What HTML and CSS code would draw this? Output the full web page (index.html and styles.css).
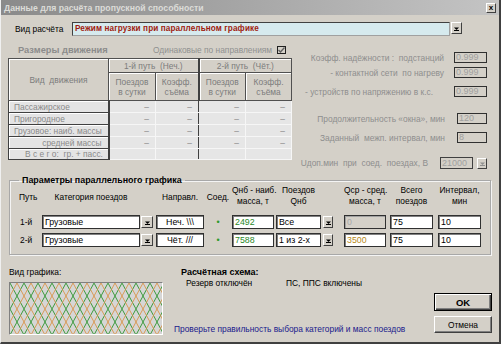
FILE: index.html
```html
<!DOCTYPE html>
<html>
<head>
<meta charset="utf-8">
<link rel="stylesheet" href="styles.css">
</head>
<body>
<div class="win">
  <div class="titlebar">
    <span class="title-text">Данные для расчёта пропускной способности</span>
    <span class="close">x</span>
  </div>
  <div class="calc-row">
    <span class="calc-label">Вид расчёта</span>
    <div class="combo">Режим нагрузки при параллельном графике</div>
    <span class="ddbtn combo-btn"><svg width="5" height="5" viewBox="0 0 5 5"><path d="M0 1.5h5L2.5 4z" fill="#000"/><path d="M0 4.5h5" stroke="#000" stroke-width="1"/></svg></span>
  </div>

  <div class="top">
    <div class="left">
      <div class="sizes-head">
        <span class="sizes-title">Размеры движения</span>
        <span class="same">Одинаковые по направлениям</span>
        <span class="check"><svg width="7" height="6" viewBox="0 0 7 6"><path d="M0.5 3l2 2 4-4.5" fill="none" stroke="#606060" stroke-width="1.4"/></svg></span>
      </div>
      <table class="grid">
        <colgroup><col class="c0"><col class="c1"><col class="c2"><col class="c3"><col class="c4"></colgroup>
        <tr class="h1">
          <th rowspan="2">Вид &nbsp;движения</th>
          <th colspan="2" class="sep">1-й путь &nbsp;(Неч.)</th>
          <th colspan="2">2-й путь &nbsp;(Чёт.)</th>
        </tr>
        <tr class="h2">
          <th>Поездов<br>в сутки</th>
          <th class="sep">Коэфф.<br>съёма</th>
          <th>Поездов<br>в сутки</th>
          <th>Коэфф.<br>съёма</th>
        </tr>
        <tr class="r"><td class="lbl">Пассажирское</td><td class="d">–</td><td class="d sep">–</td><td class="d">–</td><td class="d">–</td></tr>
        <tr class="r"><td class="lbl">Пригородное</td><td class="d">–</td><td class="d sep">–</td><td class="d">–</td><td class="d">–</td></tr>
        <tr class="r"><td class="lbl">Грузовое: наиб. массы</td><td class="d">–</td><td class="d sep">–</td><td class="d">–</td><td class="d">–</td></tr>
        <tr class="r"><td class="lbl rt">средней массы</td><td class="d">–</td><td class="d sep">–</td><td class="d">–</td><td class="d">–</td></tr>
        <tr class="r last"><td class="lbl total">В с е г о: &nbsp;гр. + пасс.</td><td class="d"></td><td class="d sep"></td><td class="d"></td><td class="d"></td></tr>
      </table>
    </div>
    <div class="right">
      <div class="prow p1"><span class="plabel">Коэфф. надёжности : &nbsp;подстанций</span><span class="dis w33">0.999</span></div>
      <div class="prow p2"><span class="plabel">- контактной сети &nbsp;по нагреву</span><span class="dis w33">0.999</span></div>
      <div class="prow p3"><span class="plabel l3">- устройств по напряжению в к.с.</span><span class="dis w33">0.999</span></div>
      <div class="prow p4"><span class="plabel l4">Продолжительность «окна», мин</span><span class="dis w30">120</span></div>
      <div class="prow p5"><span class="plabel l4">Заданный &nbsp;межп. интервал, мин</span><span class="dis w30">8</span></div>
      <div class="prow p6"><span class="plabel l6">Uдоп.мин &nbsp;при &nbsp;соед. &nbsp;поездах, В</span><span class="dis w33">21000</span><span class="ddbtn dis-btn"><svg width="5" height="5" viewBox="0 0 5 5"><path d="M0 1.5h5L2.5 4z" fill="#909090"/><path d="M0 4.5h5" stroke="#909090" stroke-width="1"/></svg></span></div>
    </div>
  </div>

  <fieldset class="group">
    <legend>Параметры параллельного графика</legend>
    <div class="pgrid">
      <div class="hd g1 one">Путь</div>
      <div class="hd g2 one">Категория поездов</div>
      <div class="hd g3"></div>
      <div class="hd g4 one">Направл.</div>
      <div class="hd g5 one">Соед.</div>
      <div class="hd g6">Qнб - наиб.<br>масса, т</div>
      <div class="hd g7">Поездов<br>Qнб</div>
      <div class="hd g8"></div>
      <div class="hd g9">Qср - сред.<br>масса, т</div>
      <div class="hd g10">Всего<br>поездов</div>
      <div class="hd g11">Интервал,<br>мин</div>

      <div class="rl g1">1-й</div>
      <div class="inp g2">Грузовые</div>
      <div class="ddbtn btn g3"><svg width="5" height="5" viewBox="0 0 5 5"><path d="M0 1.5h5L2.5 4z" fill="#000"/><path d="M0 4.5h5" stroke="#000" stroke-width="1"/></svg></div>
      <div class="inp g4 ctr">Неч. \\\</div>
      <div class="dot g5">•</div>
      <div class="inp g6 green">2492</div>
      <div class="inp g7">Все</div>
      <div class="ddbtn btn g8"><svg width="5" height="5" viewBox="0 0 5 5"><path d="M0 1.5h5L2.5 4z" fill="#000"/><path d="M0 4.5h5" stroke="#000" stroke-width="1"/></svg></div>
      <div class="inp g9 disabled">0</div>
      <div class="inp g10">75</div>
      <div class="inp g11">10</div>

      <div class="rl g1">2-й</div>
      <div class="inp g2">Грузовые</div>
      <div class="ddbtn btn g3"><svg width="5" height="5" viewBox="0 0 5 5"><path d="M0 1.5h5L2.5 4z" fill="#000"/><path d="M0 4.5h5" stroke="#000" stroke-width="1"/></svg></div>
      <div class="inp g4 ctr">Чёт. ///</div>
      <div class="dot g5">•</div>
      <div class="inp g6 green">7588</div>
      <div class="inp g7">1 из 2-х</div>
      <div class="ddbtn btn g8"><svg width="5" height="5" viewBox="0 0 5 5"><path d="M0 1.5h5L2.5 4z" fill="#000"/><path d="M0 4.5h5" stroke="#000" stroke-width="1"/></svg></div>
      <div class="inp g9 ochre">3500</div>
      <div class="inp g10">75</div>
      <div class="inp g11">10</div>
    </div>
  </fieldset>

  <div class="bottom">
    <div class="graph">
      <div class="graph-label">Вид графика:</div>
      <div class="graph-box">
        <svg width="152" height="51" viewBox="0 0 152 51">
          <defs>
            <pattern id="lat" width="14" height="26" patternUnits="userSpaceOnUse">
              <path d="M0 0L7 13L14 26M14 0L7 13L0 26" fill="none" stroke="#3c9a3c" stroke-width="1"/>
              <path d="M3.5 -6.5L10.5 6.5L17.5 19.5M-3.5 6.5L3.5 19.5L10.5 32.5M10.5 -6.5L3.5 6.5L-3.5 19.5M17.5 6.5L10.5 19.5L3.5 32.5" fill="none" stroke="#d8944a" stroke-width="0.9"/>
            </pattern>
          </defs>
          <rect width="152" height="51" fill="#d6d6d6"/>
          <rect width="152" height="51" fill="url(#lat)"/>
        </svg>
      </div>
    </div>
    <div class="scheme">
      <div class="scheme-title">Расчётная схема:</div>
      <div class="scheme-row"><span class="s1">Резерв отключён</span><span class="s2">ПС, ППС включены</span></div>
      <div class="note">Проверьте правильность выбора категорий и масс поездов</div>
    </div>
    <div class="buttons">
      <div class="button ok">OK</div>
      <div class="button cancel">Отмена</div>
    </div>
  </div>
</div>
</body>
</html>
```

FILE: styles.css
```css
html, body {
  margin: 0;
  padding: 0;
  width: 501px;
  height: 344px;
  overflow: hidden;
  background: #d4d0c8;
}
body {
  font-family: "Liberation Sans", Arial, sans-serif;
  font-size: 8.4px;
  color: #000;
  white-space: nowrap;
}
.win {
  box-sizing: border-box;
  width: 501px;
  height: 344px;
  background: #d4d0c8;
  border-right: 2px solid #404040;
  border-bottom: 2px solid #404040;
  border-left: 1px solid #f0f0f0;
  display: flex;
  flex-direction: column;
}
.titlebar {
  height: 15px;
  flex: none;
  background: linear-gradient(to right, #8a8a8a, #c4c4c4);
  display: flex;
  align-items: center;
  justify-content: space-between;
  padding: 0 3px 0 3px;
}
.title-text {
  color: #dcdcd8;
  font-weight: bold;
  font-size: 8.7px;
}
.close {
  width: 10px;
  height: 10px;
  box-sizing: border-box;
  background: #d4d0c8;
  border-top: 1px solid #fff;
  border-left: 1px solid #fff;
  border-right: 1px solid #404040;
  border-bottom: 1px solid #404040;
  font-size: 8px;
  font-weight: bold;
  line-height: 7px;
  text-align: center;
  margin-top: 1px;
}
.calc-row {
  display: flex;
  align-items: flex-start;
  flex: none;
  margin-top: 7px;
  padding-left: 14px;
  height: 14px;
}
.calc-label {
  width: 57px;
  line-height: 14px;
}
.combo {
  box-sizing: border-box;
  width: 378px;
  height: 14px;
  border: 1px solid #404040;
  border-right-color: #a0a0a0;
  border-bottom-color: #a0a0a0;
  background: #d6eaee;
  color: #a01c10;
  font-weight: bold;
  font-size: 8.2px;
  line-height: 12px;
  padding-left: 2px;
  letter-spacing: 0.1px;
}
.ddbtn {
  box-sizing: border-box;
  background: #d4d0c8;
  border-top: 1px solid #fff;
  border-left: 1px solid #fff;
  border-right: 1px solid #404040;
  border-bottom: 1px solid #404040;
  display: flex;
  align-items: center;
  justify-content: center;
}
.combo-btn {
  width: 11px;
  height: 12px;
  margin-left: 1px;
}
.top {
  display: flex;
  flex: none;
  margin-top: 8px;
}
.left {
  width: 292px;
  padding-left: 7px;
}
.sizes-head {
  display: flex;
  align-items: center;
  height: 12px;
}
.sizes-title {
  font-weight: bold;
  color: #8c8c8c;
  font-size: 9.3px;
  width: 135px;
  padding-left: 10px;
}
.same {
  color: #909090;
  width: 124px;
}
.check {
  box-sizing: border-box;
  width: 9px;
  height: 8px;
  border: 1px solid #202020;
  background: #d4d0c8;
  display: flex;
  align-items: center;
  justify-content: center;
}
.grid {
  margin-top: 2px;
  border-collapse: collapse;
  table-layout: fixed;
  width: 283px;
  border: 1px solid #404040;
}
.c0 { width: 100px; }
.c1 { width: 47px; }
.c2 { width: 43px; }
.c3 { width: 47px; }
.c4 { width: 46px; }
.grid th {
  background: #d4d0c8;
  border: 1px solid #505050;
  box-shadow: inset 1px 1px #fff;
  font-weight: normal;
  color: #7c7c7c;
  padding: 0;
  line-height: 10px;
  text-align: center;
}
.h1 th { height: 13px; }
.h1 th:first-child { height: 41px; }
.h2 th { height: 27px; }
.grid td {
  height: 11px;
  padding: 0;
  line-height: 10px;
  background: #e6e6e6;
  color: #8a8a8a;
  overflow: hidden;
}
.grid .lbl {
  border-right: 2px solid #404040;
  border-bottom: 1px solid #404040;
  box-shadow: inset 1px 1px #fff;
  padding-left: 5px;
  background: #e4e4e4;
}
.grid .lbl.rt {
  text-align: right;
  padding-right: 6px;
}
.grid .lbl.total {
  padding-left: 16px;
}
.grid .d {
  border-right: 1px solid #f6f6f6;
  border-bottom: 1px solid #f6f6f6;
  text-align: right;
  padding-right: 6px;
}
.grid .sep {
  border-right: 1px solid #404040;
}
.grid th.sep { border-right: 2px solid #404040; }
.grid .last td { height: 10px; }
.right {
  flex: 1;
  padding-right: 12px;
  display: flex;
  flex-direction: column;
  align-items: flex-end;
}
.prow {
  display: flex;
  align-items: center;
  height: 11px;
}
.p1 { margin-top: 8px; }
.p2 { margin-top: 4px; }
.p3 { margin-top: 8px; }
.p4 { margin-top: 16px; }
.p5 { margin-top: 8px; }
.p6 { margin-top: 14px; height: 12px; }
.plabel {
  color: #8e8e8e;
  margin-right: 10px;
}
.plabel.l3 { margin-right: 21px; }
.plabel.l4 { margin-right: 12px; }
.plabel.l6 { margin-right: 12px; }
.dis {
  box-sizing: border-box;
  height: 11px;
  border: 1px solid #303030;
  background: #d4d0c8;
  color: #a0a0a0;
  line-height: 9px;
  padding-left: 1px;
  font-size: 9px;
}
.w33 { width: 33px; }
.w30 { width: 30px; }
.dis-btn {
  width: 10px;
  height: 11px;
  margin-left: 4px;
}
.p6 .dis { height: 12px; line-height: 10px; border-color: #404040; }
.group {
  flex: none;
  margin: 6px 8px 0 8px;
  padding: 0 0 0 6px;
  border: 1px solid #a8a8a8;
  box-shadow: inset 1px 1px #f4f4f4, 1px 1px #f4f4f4;
  height: 80px;
  box-sizing: border-box;
  min-width: 0;
}
.group legend {
  font-weight: bold;
  font-size: 8.9px;
  padding: 0 3px;
  margin-left: 3px;
  line-height: 11px;
}
.pgrid {
  display: grid;
  grid-template-columns: 26px 98px 14px 52px 24px 46px 46px 12px 54px 47px 48px;
  grid-template-rows: 25px 14px 14px;
  row-gap: 4px;
}
.hd {
  text-align: center;
  line-height: 11px;
  align-self: start;
  margin-top: -1px;
}
.hd.one { padding-top: 7px; }
.hd.g1 { text-align: left; padding-left: 3px; }
.pgrid .inp {
  box-sizing: border-box;
  height: 14px;
  background: #fff;
  border: 1px solid #303030;
  box-shadow: inset 1px 1px #808080;
  line-height: 12px;
  padding-left: 2px;
  overflow: hidden;
  font-size: 8.8px;
}
.hd, .inp { box-sizing: border-box; }
.g2 { width: 98px; }
.g3 { margin-left: 1px; width: 12px; }
.g4 { margin-left: 2px; width: 48px; }
.g6 { margin-left: 2px; width: 42px; }
.g7 { width: 45px; }
.g8 { margin-left: 1px; width: 10px; }
.g9 { margin-left: 10px; width: 42px; }
.g10 { margin-left: 2px; width: 43px; }
.g11 { margin-left: 3px; width: 43px; }
.pgrid .btn {
  height: 12px;
  align-self: center;
}
.pgrid .inp.ctr { text-align: center; padding-left: 0; }
.rl {
  line-height: 14px;
  padding-left: 4px;
}
.dot {
  color: #2d9a2d;
  text-align: center;
  line-height: 14px;
  font-size: 9px;
}
.green { color: #2a8a2a; }
.ochre { color: #b88a20; }
.pgrid .inp.disabled {
  background: #d4d0c8;
  color: #a8a8a8;
  box-shadow: inset 1px 1px #a0a0a0;
}
.bottom {
  display: flex;
  flex: 1;
  min-height: 0;
  margin-top: 11px;
}
.graph {
  flex: none;
  width: 154px;
  margin-left: 8px;
}
.graph-label {
  line-height: 12px;
}
.graph-box {
  margin-top: 4px;
  width: 154px;
  height: 53px;
  box-sizing: border-box;
  border-top: 1px solid #808080;
  border-left: 1px solid #808080;
  border-right: 1px solid #fff;
  border-bottom: 1px solid #fff;
  line-height: 0;
}
.scheme {
  flex: none;
  width: 253px;
  margin-left: 11px;
  display: flex;
  flex-direction: column;
}
.scheme-title {
  font-weight: bold;
  font-size: 9px;
  line-height: 12px;
  padding-left: 7px;
}
.scheme-row {
  display: flex;
  line-height: 11px;
  padding-left: 12px;
}
.s1 { width: 100px; }
.note {
  margin-top: auto;
  margin-bottom: 7px;
  color: #1a1a8c;
  line-height: 11px;
}
.buttons {
  flex: none;
  margin-left: 7px;
  padding-top: 27px;
  display: flex;
  flex-direction: column;
  align-items: flex-start;
}
.button {
  box-sizing: border-box;
  width: 58px;
  display: flex;
  align-items: center;
  justify-content: center;
  background: #d4d0c8;
}
.ok {
  height: 18px;
  border: 1px solid #000;
  box-shadow: inset 1px 1px #fff, inset -1px -1px #404040, inset -2px -2px #808080;
  font-weight: bold;
  font-size: 9.5px;
}
.cancel {
  height: 17px;
  margin-top: 5px;
  border-top: 1px solid #fff;
  border-left: 1px solid #fff;
  border-right: 1px solid #404040;
  border-bottom: 1px solid #404040;
  box-shadow: inset -1px -1px #808080;
}
```
